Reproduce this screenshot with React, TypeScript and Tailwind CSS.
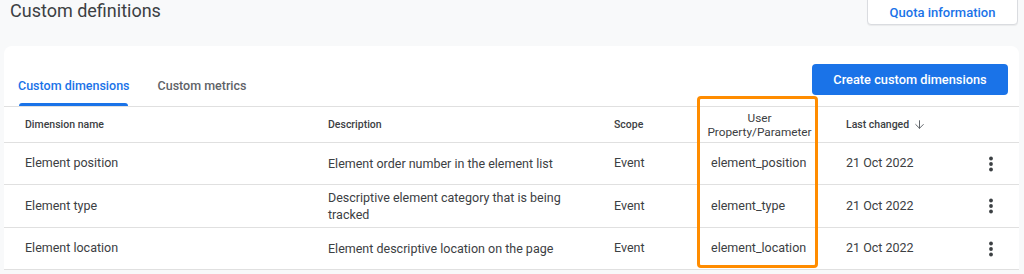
import { ArrowDown } from 'lucide-react';

const rows = [
    { name: 'Element position', desc: ['Element order number in the element list'], param: 'element_position', h: 'h-[42px]' },
    { name: 'Element type', desc: ['Descriptive element category that is being', 'tracked'], param: 'element_type', h: 'h-[43px]' },
    { name: 'Element location', desc: ['Element descriptive location on the page'], param: 'element_location', h: 'h-[42px]' },
];

function Kebab() {
    return (
        <svg width="4" height="16" viewBox="0 0 4 16" className="fill-[#3c4043]">
            <circle cx="2" cy="2.5" r="1.9" />
            <circle cx="2" cy="8" r="1.9" />
            <circle cx="2" cy="13.5" r="1.9" />
        </svg>
    );
}

const cols = 'grid grid-cols-[303px_286px_83px_121px_149px_1fr] pl-[21px]';

export default function App() {
    return (
        <main className="w-[1024px] h-[274px] overflow-hidden bg-[#f8f9fa] text-[#3c4043] font-['Roboto',sans-serif]">
            <div className="flex justify-between h-[46px] pl-[10px] pr-[6px]">
                <h1 className="text-[18px] leading-[24px] mt-[-1px] text-[#3c4043]">Custom definitions</h1>
                <button className="-mt-[11px] h-[36px] w-[151px] rounded bg-white border border-[#dadce0] shadow-[0_1px_1px_rgba(0,0,0,0.06)] text-[13px] font-medium text-[#1a73e8] pt-[11px]">
                    Quota information
                </button>
            </div>
            <div className="relative ml-[4px] w-[1015px] bg-white rounded-t-lg">
                <div className="flex justify-between items-end h-[61px] pl-[14px] pr-[11px] border-b border-[#e0e0e0]">
                    <div className="flex gap-[28px]">
                        <div className="relative h-[40px] flex items-center text-[12.5px] font-medium text-[#1a73e8]">
                            Custom dimensions
                            <span className="absolute bottom-0 left-[1px] right-[2px] h-[3px] rounded-t-[3px] bg-[#1a73e8]"></span>
                        </div>
                        <div className="h-[40px] flex items-center text-[12.5px] font-medium text-[#5f6368]">Custom metrics</div>
                    </div>
                    <button className="mb-[11px] h-[31px] w-[196px] rounded bg-[#1a73e8] text-white text-[12.8px] font-medium">
                        Create custom dimensions
                    </button>
                </div>
                <div className={`${cols} h-[36px] items-center text-[10.5px] font-medium border-b border-[#e0e0e0]`}>
                    <div>Dimension name</div>
                    <div>Description</div>
                    <div>Scope</div>
                    <div className="text-center text-[11.8px] font-normal leading-[14px] pl-[4px]">User<br />Property/Parameter</div>
                    <div className="pl-[28px] flex items-center gap-[4px]">
                        Last changed
                        <ArrowDown size={13} strokeWidth={1.8} className="text-[#5f6368]" />
                    </div>
                    <div></div>
                </div>
                {rows.map((r) => (
                    <div key={r.param} className={`${cols} ${r.h} items-center text-[12.5px] border-b border-[#e0e0e0]`}>
                        <div>{r.name}</div>
                        <div className="leading-[17px]">
                            {r.desc.map((d) => (
                                <div key={d}>{d}</div>
                            ))}
                        </div>
                        <div>Event</div>
                        <div className="pl-[14px]">{r.param}</div>
                        <div className="pl-[28px]">21 Oct 2022</div>
                        <div className="pl-[22px] flex"><Kebab /></div>
                    </div>
                ))}
                <div className="absolute left-[693px] top-[50px] w-[121px] h-[172px] border-[3px] border-[#ff8c00] rounded-[4px]"></div>
            </div>
        </main>
    );
}
